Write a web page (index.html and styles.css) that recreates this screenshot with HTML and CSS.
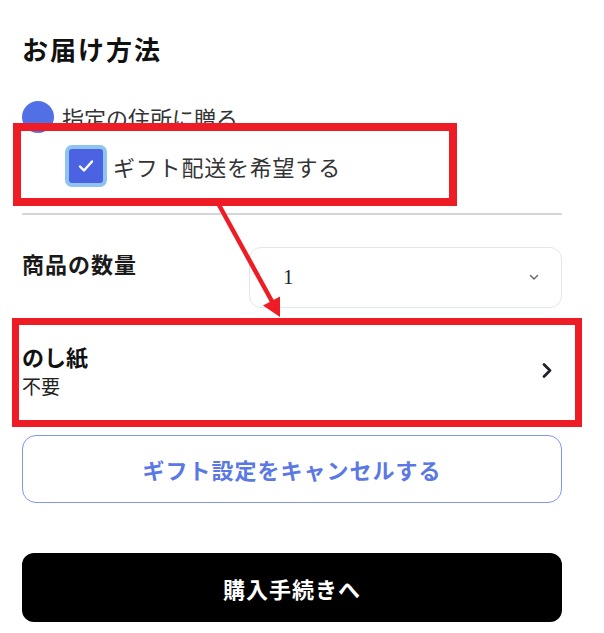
FILE: index.html
```html
<!DOCTYPE html>
<html lang="ja">
<head>
<meta charset="utf-8">
<link rel="stylesheet" href="styles.css">
</head>
<body>
<div class="page">
  <h1 class="title">お届け方法</h1>
  <div class="radio-row">
    <span class="radio"></span>
    <span class="radio-label">指定の住所に贈る</span>
  </div>
  <div class="gift-row">
    <span class="checkbox">
      <svg width="18" height="14" viewBox="0 0 18 14"><path d="M3 7.5 L7 11.5 L15 2.5" fill="none" stroke="#fff" stroke-width="2.4" stroke-linecap="round" stroke-linejoin="round"/></svg>
    </span>
    <span class="gift-label">ギフト配送を希望する</span>
  </div>
  <div class="divider"></div>
  <div class="qty-row">
    <span class="qty-label">商品の数量</span>
    <div class="select">
      <span class="select-value">1</span>
      <svg class="select-chevron" width="10" height="7" viewBox="0 0 10 7"><path d="M1.5 1.5 L5 5 L8.5 1.5" fill="none" stroke="#6b6f78" stroke-width="1.6" stroke-linecap="round" stroke-linejoin="round"/></svg>
    </div>
  </div>
  <div class="noshi-row">
    <div class="noshi-text">
      <div class="noshi-title">のし紙</div>
      <div class="noshi-sub">不要</div>
    </div>
    <svg class="noshi-chevron" width="12" height="17" viewBox="0 0 12 17"><path d="M3 2.5 L9 8.5 L3 14.5" fill="none" stroke="#1f2228" stroke-width="2.8" stroke-linecap="round" stroke-linejoin="round"/></svg>
  </div>
  <button class="btn-cancel">ギフト設定をキャンセルする</button>
  <button class="btn-buy">購入手続きへ</button>

  <div class="mark mark-gift"></div>
  <div class="mark mark-noshi"></div>
  <svg class="arrow" width="604" height="633" viewBox="0 0 604 633">
    <line x1="219" y1="205" x2="274" y2="305" stroke="#ee1c24" stroke-width="4.5"/>
    <polygon points="280,317 263,305.5 280,296.5" fill="#ee1c24"/>
  </svg>
</div>
</body>
</html>
```
FILE: styles.css
```css
html, body {
  margin: 0;
  padding: 0;
  background: #fff;
}
body {
  font-family: "Noto Sans CJK JP", "Noto Sans", sans-serif;
  color: #1b1b1b;
}
.page {
  position: relative;
  width: 540px;
  height: 633px;
  padding: 0 42px 0 22px;
  overflow: hidden;
}
.title {
  margin: 0;
  padding-top: 32px;
  font-size: 26px;
  line-height: 34px;
  font-weight: 700;
  letter-spacing: 2px;
  color: #111;
}
.radio-row {
  display: flex;
  align-items: center;
  gap: 8px;
  margin-top: 35px;
  height: 32px;
}
.radio {
  width: 32px;
  height: 32px;
  border-radius: 50%;
  background: #5170e6;
  flex: none;
}
.radio-label {
  font-size: 22px;
  line-height: 30px;
  color: #333;
}
.gift-row {
  display: flex;
  align-items: center;
  gap: 10px;
  margin-top: 16px;
  padding-left: 47px;
  height: 34px;
}
.checkbox {
  width: 34px;
  height: 34px;
  border-radius: 3px;
  background: #4b63e2;
  box-shadow: 0 0 0 4px #8fc3f2;
  display: flex;
  align-items: center;
  justify-content: center;
  flex: none;
}
.gift-label {
  font-size: 22px;
  line-height: 30px;
  color: #333;
  letter-spacing: 0.8px;
}
.divider {
  margin-top: 30px;
  height: 2px;
  background: #d5d5d5;
}
.qty-row {
  display: flex;
  align-items: flex-start;
  justify-content: space-between;
  margin-top: 32px;
}
.qty-label {
  font-size: 22px;
  line-height: 30px;
  font-weight: 700;
  letter-spacing: 1px;
  padding-top: 1px;
  color: #1a1a1a;
}
.select {
  width: 313px;
  height: 61px;
  box-sizing: border-box;
  border: 1.5px solid #e1e6f1;
  border-radius: 12px;
  display: flex;
  align-items: center;
  justify-content: space-between;
  padding: 0 22px 0 33px;
}
.select-value {
  font-family: "Liberation Serif", serif;
  font-size: 21px;
  color: #222;
}
.noshi-row {
  display: flex;
  align-items: center;
  justify-content: space-between;
  margin-top: 34px;
  padding-right: 9px;
}
.noshi-title {
  font-size: 22px;
  line-height: 28px;
  font-weight: 700;
  color: #111;
}
.noshi-sub {
  margin-top: 3px;
  font-size: 19px;
  line-height: 26px;
  color: #222;
}
.btn-cancel {
  display: block;
  width: 540px;
  height: 68px;
  margin-top: 36px;
  box-sizing: border-box;
  border: 1.5px solid #7d97f3;
  border-radius: 14px;
  background: #fff;
  font-family: "Noto Sans CJK JP", sans-serif;
  font-size: 22px;
  font-weight: 700;
  color: #5b78e4;
  letter-spacing: 1px;
  padding: 0;
}
.btn-buy {
  display: block;
  width: 540px;
  height: 69px;
  margin-top: 50px;
  border: none;
  border-radius: 12px;
  background: #000;
  font-family: "Noto Sans CJK JP", sans-serif;
  font-size: 22px;
  font-weight: 700;
  color: #fff;
  letter-spacing: 1px;
  padding: 0;
}
.mark {
  position: absolute;
  box-sizing: border-box;
  border: 8px solid #ee1c24;
}
.mark-gift {
  left: 13px;
  top: 123px;
  width: 444px;
  height: 83px;
}
.mark-noshi {
  left: 12px;
  top: 318px;
  width: 570px;
  height: 109px;
  border-width: 7px;
}
.arrow {
  position: absolute;
  left: 0;
  top: 0;
  pointer-events: none;
}
```
